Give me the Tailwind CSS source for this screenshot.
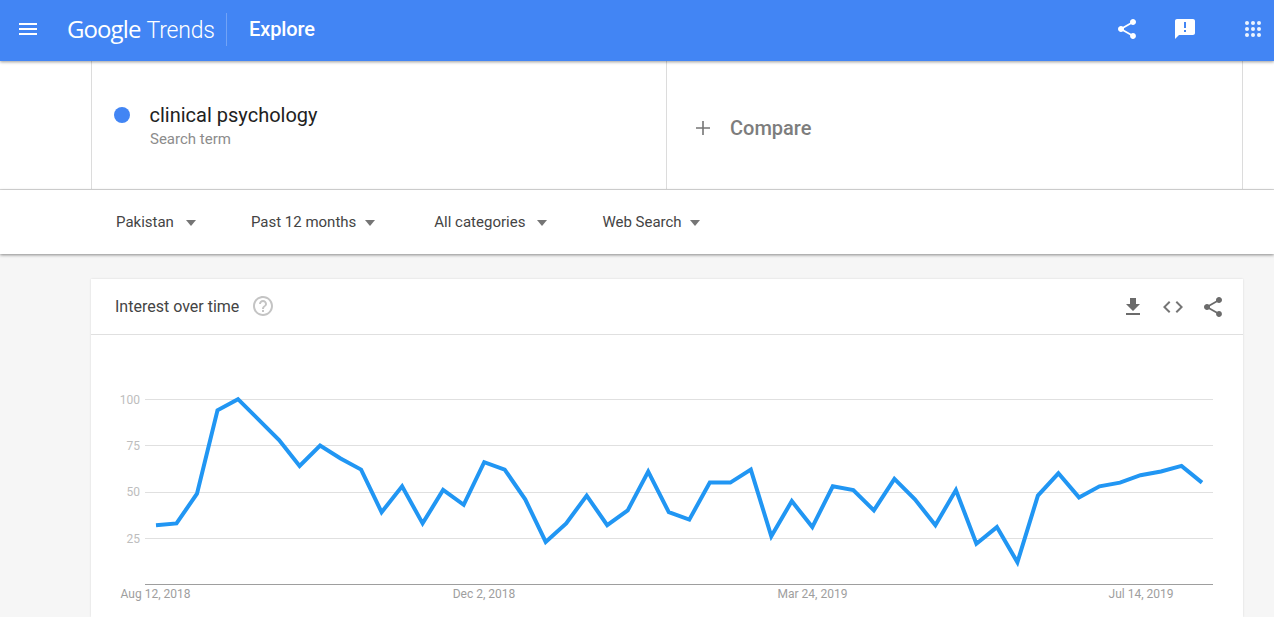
<!DOCTYPE html>
<html lang="en">
<head>
  <meta charset="UTF-8" />
  <title>Explore - Google Trends</title>
  <script src="https://cdn.jsdelivr.net/npm/@tailwindcss/browser@4"></script>
</head>
<body class="h-[617px] overflow-hidden bg-[#f6f6f6] font-['Roboto',sans-serif] text-[#333]">

  <!-- Header -->
  <header class="relative z-20 h-[61px] bg-[#4285f4] shadow-[0_1px_3px_rgba(0,0,0,0.4)] flex items-center text-white pb-[3px]">
    <svg class="ml-[16px] w-[24px] h-[24px]" viewBox="0 0 24 24" fill="#fff"><path d="M3 18h18v-2H3v2zm0-5h18v-2H3v2zm0-7v2h18V6H3z"/></svg>
    <div class="ml-[27px] flex items-baseline w-[142px] gap-[6px] font-['Open_Sans',sans-serif] text-[24px] tracking-[-0.9px] leading-none">
      <span>Google</span><span class="font-['Roboto',sans-serif] font-light tracking-[-0.2px] text-[23px]">Trends</span>
    </div>
    <div class="ml-[17px] w-px h-[33px] bg-white/25"></div>
    <div class="ml-[22px] text-[20px] font-medium tracking-[-0.1px]">Explore</div>
    <div class="ml-auto flex items-center">
      <svg class="w-[24px] h-[24px]" viewBox="0 0 24 24" fill="#fff"><path d="M18 16.08c-.76 0-1.44.3-1.96.77L8.91 12.7c.05-.23.09-.46.09-.7s-.04-.47-.09-.7l7.05-4.11c.54.5 1.25.81 2.04.81 1.66 0 3-1.34 3-3s-1.34-3-3-3-3 1.34-3 3c0 .24.04.47.09.7L8.04 9.81C7.5 9.31 6.79 9 6 9c-1.66 0-3 1.34-3 3s1.34 3 3 3c.79 0 1.5-.31 2.04-.81l7.12 4.16c-.05.21-.08.43-.08.65 0 1.61 1.31 2.92 2.92 2.92 1.61 0 2.92-1.31 2.92-2.92s-1.31-2.92-2.92-2.92z"/></svg>
      <svg class="ml-[34px] w-[24px] h-[24px]" viewBox="0 0 24 24" fill="#fff"><path d="M20 2H4c-1.1 0-2 .9-2 2v18l4-4h14c1.1 0 2-.9 2-2V4c0-1.1-.9-2-2-2zm-7 9h-2V5h2v6zm0 4h-2v-2h2v2z"/></svg>
      <svg class="ml-[44px] mr-[9px] w-[24px] h-[24px]" viewBox="0 0 24 24" fill="#fff" fill-opacity="0.9">
        <circle cx="6" cy="6" r="2"/><circle cx="12" cy="6" r="2"/><circle cx="18" cy="6" r="2"/>
        <circle cx="6" cy="12" r="2"/><circle cx="12" cy="12" r="2"/><circle cx="18" cy="12" r="2"/>
        <circle cx="6" cy="18" r="2"/><circle cx="12" cy="18" r="2"/><circle cx="18" cy="18" r="2"/>
      </svg>
    </div>
  </header>

  <!-- Search terms -->
  <section class="bg-white border-b border-[#dcdcdc] h-[129px] pl-[91px]">
    <div class="w-[1152px] h-full flex border-x border-[#dcdcdc]">
      <div class="w-[575px] h-full border-r border-[#dcdcdc] flex pl-[22px] pt-[39px]">
        <span class="mt-[7px] w-[16px] h-[16px] rounded-full bg-[#4285f4]"></span>
        <div class="ml-[20px]">
          <div class="text-[20px] leading-[30px] text-[#212121] -ml-[0.5px]">clinical psychology</div>
          <div class="text-[15px] leading-[18px] text-[#8c8c8c]">Search term</div>
        </div>
      </div>
      <div class="flex-1 flex items-center pl-[24px] pt-[5px]">
        <svg class="w-[24px] h-[24px]" viewBox="0 0 24 24" fill="none" stroke="#757575" stroke-width="1.6"><path d="M12 5v14M5 12h14"/></svg>
        <span class="ml-[15px] text-[20px] font-medium text-[#7d7d7d]">Compare</span>
      </div>
    </div>
  </section>

  <!-- Filters -->
  <section class="relative z-10 bg-white h-[64px] shadow-[0_1px_3px_rgba(0,0,0,0.45)] flex items-center pl-[116px] pt-[1px] text-[15px] text-[#444]">
    <span>Pakistan</span>
    <span class="ml-[12px] border-x-[5.5px] border-x-transparent border-t-[6px] border-t-[#757575]"></span>
    <span class="ml-[55px]">Past 12 months</span>
    <span class="ml-[9px] border-x-[5.5px] border-x-transparent border-t-[6px] border-t-[#757575]"></span>
    <span class="ml-[59px]">All categories</span>
    <span class="ml-[12px] border-x-[5.5px] border-x-transparent border-t-[6px] border-t-[#757575]"></span>
    <span class="ml-[55px]">Web Search</span>
    <span class="ml-[8px] border-x-[5.5px] border-x-transparent border-t-[6px] border-t-[#757575]"></span>
  </section>

  <!-- Interest over time -->
  <section class="ml-[91px] mt-[25px] w-[1152px] h-[338px] bg-white shadow-[0_0_2px_rgba(0,0,0,0.12)]">
    <div class="h-[56px] border-b border-[#e0e0e0] flex items-center pl-[24px] pr-[18px]">
      <span class="text-[16px] text-[#444]">Interest over time</span>
      <svg class="ml-[12px] w-[24px] h-[24px] -mt-[1px]" viewBox="0 0 24 24" fill="#c4c4c4"><path d="M11 18h2v-2h-2v2zm1-16C6.48 2 2 6.48 2 12s4.48 10 10 10 10-4.48 10-10S17.52 2 12 2zm0 18c-4.41 0-8-3.59-8-8s3.59-8 8-8 8 3.59 8 8-3.59 8-8 8zm0-14c-2.21 0-4 1.79-4 4h2c0-1.1.9-2 2-2s2 .9 2 2c0 2-3 1.75-3 5h2c0-2.25 3-2.5 3-5 0-2.21-1.79-4-4-4z"/></svg>
      <div class="ml-auto flex items-center gap-[16px]">
        <svg class="w-[24px] h-[24px]" viewBox="0 0 24 24" fill="#6b6b6b"><path d="M19 9h-4V3H9v6H5l7 7 7-7zM5 18v2h14v-2H5z"/></svg>
        <svg class="w-[24px] h-[24px]" viewBox="0 0 24 24" fill="#757575"><path d="M9.4 16.6 4.8 12l4.6-4.6L8 6l-6 6 6 6 1.4-1.4zm5.2 0 4.6-4.6-4.6-4.6L16 6l6 6-6 6-1.4-1.4z"/></svg>
        <svg class="w-[24px] h-[24px]" viewBox="0 0 24 24" fill="#6b6b6b"><path d="M18 16.08c-.76 0-1.44.3-1.96.77L8.91 12.7c.05-.23.09-.46.09-.7s-.04-.47-.09-.7l7.05-4.11c.54.5 1.25.81 2.04.81 1.66 0 3-1.34 3-3s-1.34-3-3-3-3 1.34-3 3c0 .24.04.47.09.7L8.04 9.81C7.5 9.31 6.79 9 6 9c-1.66 0-3 1.34-3 3s1.34 3 3 3c.79 0 1.5-.31 2.04-.81l7.12 4.16c-.05.21-.08.43-.08.65 0 1.61 1.31 2.92 2.92 2.92 1.61 0 2.92-1.31 2.92-2.92s-1.31-2.92-2.92-2.92z"/></svg>
      </div>
    </div>

    <!-- Chart: svg starts at x=91, y=335 on the page -->
    <svg class="block" width="1152" height="282" font-family="Roboto, sans-serif" font-size="12">
      <g stroke="#e0e0e0" stroke-width="1">
        <path d="M54 64.5H1122M54 110.5H1122M54 157.5H1122M54 203.5H1122"/>
      </g>
      <path d="M54 249.5H1122" stroke="#9e9e9e" stroke-width="1"/>
      <g fill="#bdbdbd" text-anchor="end">
        <text x="49" y="69">100</text>
        <text x="49" y="115">75</text>
        <text x="49" y="161">50</text>
        <text x="49" y="208">25</text>
      </g>
      <g fill="#9e9e9e" text-anchor="middle">
        <text x="64.5" y="263">Aug 12, 2018</text>
        <text x="393" y="263">Dec 2, 2018</text>
        <text x="721.5" y="263">Mar 24, 2019</text>
        <text x="1050" y="263">Jul 14, 2019</text>
      </g>
      <polyline id="line" fill="none" stroke="#2196f3" stroke-width="4" stroke-linejoin="miter" />
    </svg>
  </section>

  <script>
    const values = [32,33,49,94,100,89,78,64,75,68,62,39,53,33,51,43,66,62,46,23,33,48,32,40,61,39,35,55,55,62,26,45,31,53,51,40,57,46,32,51,22,31,12,48,60,47,53,55,59,61,64,55];
    const points = values.map((v, i) => {
      const x = 65 + i * 20.51;
      const y = 249.5 - v * 1.853;
      return x.toFixed(1) + "," + y.toFixed(1);
    });
    document.getElementById("line").setAttribute("points", points.join(" "));
  </script>

</body>
</html>
